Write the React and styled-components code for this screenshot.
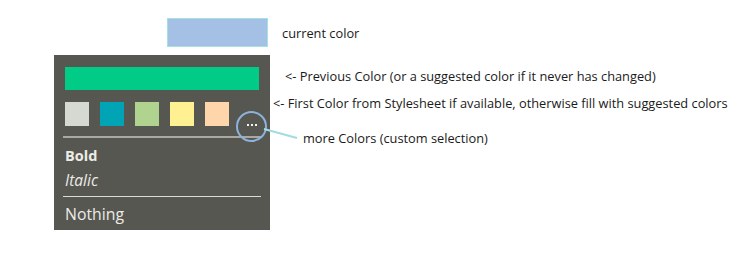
import styled, { createGlobalStyle } from 'styled-components'

const Global = createGlobalStyle`
  body {
    margin: 0;
    background: #ffffff;
    font-family: "Open Sans", "Noto Sans", sans-serif;
    color: #1a1a1a;
  }
`

const Page = styled.div`
  padding: 18px 0 0 54px;
  width: 754px;
  height: 279px;
  box-sizing: border-box;
`

const TopRow = styled.div`
  display: flex;
  align-items: center;
  padding-left: 113px;
  height: 29px;
`

const Current = styled.div`
  width: 99px;
  height: 27px;
  background: #a4c0e4;
  border: 1px solid #a6e0e2;
`

const Note = styled.div`
  font-size: 12.8px;
  line-height: 16px;
  white-space: nowrap;
  margin-left: ${p => p.indent}px;
  margin-top: ${p => p.top}px;
`

const Main = styled.div`
  display: flex;
  margin-top: 8px;
`

const Panel = styled.div`
  position: relative;
  width: 216px;
  height: 175px;
  box-sizing: border-box;
  background: #575752;
  padding: 12px 11px 0 11px;
  color: #ecece6;
`

const Previous = styled.div`
  height: 23px;
  background: #00cc88;
`

const Swatches = styled.div`
  display: flex;
  gap: 11px;
  margin-top: 12px;
`

const Swatch = styled.div`
  width: 24px;
  height: 24px;
  background: ${p => p.color};
`

const Rule = styled.div`
  height: ${p => p.thick}px;
  background: ${p => p.color};
  margin: ${p => p.gap}px -2px 0 -2px;
`

const Item = styled.div`
  font-size: ${p => p.size}px;
  line-height: 25px;
  font-weight: ${p => (p.bold ? 700 : 400)};
  font-style: ${p => (p.italic ? 'italic' : 'normal')};
`

const Items = styled.div`
  padding-top: 5px;
`

const More = styled.div`
  position: absolute;
  left: 182px;
  top: 56px;
  width: 31px;
  height: 31px;
  box-sizing: border-box;
  border: 2px solid #8db2dc;
  border-radius: 50%;
  display: flex;
  align-items: center;
  justify-content: center;
  gap: 2px;
  padding-bottom: 4px;
`

const Dot = styled.span`
  width: 2px;
  height: 2px;
  background: #f4f4f0;
`

const Connector = styled.svg`
  position: absolute;
  left: 210px;
  top: 74px;
  overflow: visible;
`

const Notes = styled.div`
  display: flex;
  flex-direction: column;
`

export default function App() {
  const swatches = ['#d6d8d2', '#00a4b4', '#b0d490', '#fff092', '#ffd6ac']
  return (
    <Page>
      <Global />
      <TopRow>
        <Current />
        <Note indent={14} top={0}>current color</Note>
      </TopRow>
      <Main>
        <Panel>
          <Previous />
          <Swatches>
            {swatches.map(c => (
              <Swatch key={c} color={c} />
            ))}
          </Swatches>
          <Rule thick={2} color="#a9a9a2" gap={10} />
          <Items>
            <Item size={14.5} bold>Bold</Item>
            <Item size={15.5} italic>Italic</Item>
          </Items>
          <Rule thick={1} color="#dcdcd4" gap={3} />
          <Items>
            <Item size={15.8}>Nothing</Item>
          </Items>
          <More>
            <Dot />
            <Dot />
            <Dot />
          </More>
          <Connector width="40" height="20">
            <line x1="0" y1="0" x2="33" y2="9" stroke="#a2dbe2" strokeWidth="2" />
          </Connector>
        </Panel>
        <Notes>
          <Note indent={15} top={13}>&lt;- Previous Color (or a suggested color if it never has changed)</Note>
          <Note indent={3} top={11}>&lt;- First Color from Stylesheet if available, otherwise fill with suggested colors</Note>
          <Note indent={33} top={19}>more Colors (custom selection)</Note>
        </Notes>
      </Main>
    </Page>
  )
}
